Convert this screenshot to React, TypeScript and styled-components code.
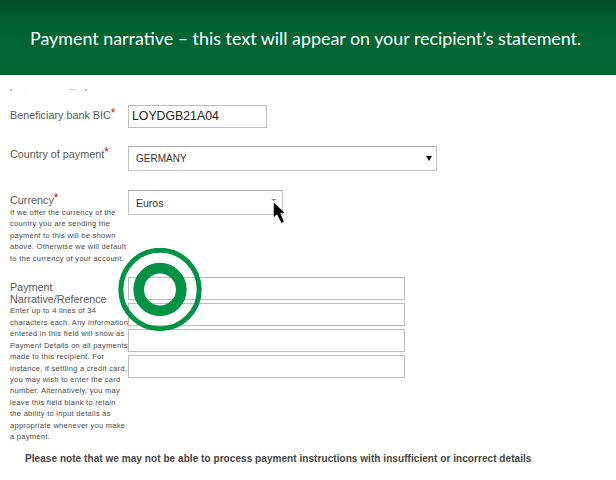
import styled, { createGlobalStyle } from "styled-components";

const GlobalStyle = createGlobalStyle`
  html, body {
    margin: 0;
    padding: 0;
    background: #fff;
  }
`;

const Page = styled.div`
  position: relative;
  width: 616px;
  height: 480px;
  overflow: hidden;
  font-family: "Liberation Sans", Arial, sans-serif;
`;

const Banner = styled.header`
  height: 75px;
  box-sizing: border-box;
  padding: 25px 0 0 30px;
  background: linear-gradient(#014a27 0, #016232 22px, #006633 40px);
  color: #fff;
  font-family: Lato, sans-serif;
  font-size: 17.87px;
  line-height: 26px;
  white-space: nowrap;
`;

const Form = styled.main`
  display: flex;
  flex-direction: column;
  padding: 14px 0 0 10px;
`;

/* what is left of a line cut off by the banner */
const CutLine = styled.div`
  width: 90px;
  height: 2px;
  margin-bottom: 14px;
  background:
    linear-gradient(#bbb, #bbb) 0 0 / 2px 2px no-repeat,
    linear-gradient(#ccc, #ccc) 15px 0 / 1px 1px no-repeat,
    linear-gradient(#ccc, #ccc) 60px 0 / 6px 1px no-repeat,
    linear-gradient(#bbb, #bbb) 75px 0 / 2px 2px no-repeat;
`;

const Row = styled.div<{ $gap: number }>`
  display: flex;
  align-items: flex-start;
  margin-bottom: ${(p) => p.$gap}px;
`;

const LabelColumn = styled.div`
  flex: 0 0 118px;
  width: 118px;
  white-space: nowrap;
`;

const Label = styled.label<{ $top?: number }>`
  display: block;
  padding-top: ${(p) => p.$top ?? 0}px;
  color: #5a5a5a;
  font-size: 10.8px;
  line-height: 12px;
`;

const Required = styled.span`
  color: #d2121a;
  font-size: 12px;
  position: relative;
  top: -2px;
`;

const Help = styled.p<{ $top?: number }>`
  margin: ${(p) => p.$top ?? 0}px 0 0;
  color: #4a4a4a;
  font-size: 7.5px;
  line-height: 11.45px;
  letter-spacing: 0.28px;
`;

const TextBox = styled.div<{ $w: number; $h: number }>`
  box-sizing: border-box;
  width: ${(p) => p.$w}px;
  height: ${(p) => p.$h}px;
  padding-left: 3px;
  border: 1px solid #bdbdbd;
  background: #fff;
  color: #222;
  font-size: 12.3px;
  line-height: ${(p) => p.$h - 2}px;
`;

const Select = styled.div<{ $w: number; $pad: number; $small?: boolean }>`
  display: flex;
  align-items: center;
  justify-content: space-between;
  box-sizing: border-box;
  width: ${(p) => p.$w}px;
  height: 25px;
  padding: 0 ${(p) => p.$pad}px 0 7px;
  border: 1px solid #c4c4c4;
  border-top-color: #aaa;
  background: #fff;
  color: #333;
  font-size: ${(p) => (p.$small ? 10.5 : 10)}px;
`;

const Caret = styled.span<{ $covered?: boolean }>`
  width: 0;
  height: 0;
  margin-bottom: ${(p) => (p.$covered ? 6 : 0)}px;
  border-left: 3px solid transparent;
  border-right: 3px solid transparent;
  border-top: ${(p) => (p.$covered ? "2px solid #888" : "5px solid #111")};
`;

const Inputs = styled.div`
  display: flex;
  flex-direction: column;
  gap: 3px;
`;

const Note = styled.p`
  margin: 10px 0 0 15px;
  color: #444;
  font-size: 10px;
  font-weight: bold;
  letter-spacing: 0.06px;
  white-space: nowrap;
`;

const Target = styled.svg`
  position: absolute;
  left: 118px;
  top: 248px;
`;

const Pointer = styled.svg`
  position: absolute;
  left: 273px;
  top: 202px;
`;

export default function App() {
  return (
    <Page>
      <GlobalStyle />
      <Banner>Payment narrative – this text will appear on your recipient’s statement.</Banner>
      <Form>
        <CutLine />
        <Row $gap={18}>
          <LabelColumn>
            <Label $top={4}>
              Beneficiary bank BIC<Required>*</Required>
            </Label>
          </LabelColumn>
          <TextBox $w={139} $h={23}>LOYDGB21A04</TextBox>
        </Row>
        <Row $gap={19}>
          <LabelColumn>
            <Label $top={2}>
              Country of payment<Required>*</Required>
            </Label>
          </LabelColumn>
          <Select $w={309} $pad={4}>
            GERMANY
            <Caret />
          </Select>
        </Row>
        <Row $gap={13}>
          <LabelColumn>
            <Label $top={4}>
              Currency<Required>*</Required>
            </Label>
            <Help $top={1}>
              If we offer the currency of the
              <br />
              country you are sending the
              <br />
              payment to this will be shown
              <br />
              above. Otherwise we will default
              <br />
              to the currency of your account.
            </Help>
          </LabelColumn>
          <Select $w={155} $pad={5} $small>
            Euros
            <Caret $covered />
          </Select>
        </Row>
        <Row $gap={0}>
          <LabelColumn>
            <Label $top={4}>
              Payment
              <br />
              Narrative/Reference
            </Label>
            <Help>
              Enter up to 4 lines of 34
              <br />
              characters each. Any information
              <br />
              entered in this field will show as
              <br />
              Payment Details on all payments
              <br />
              made to this recipient. For
              <br />
              instance, if settling a credit card,
              <br />
              you may wish to enter the card
              <br />
              number. Alternatively, you may
              <br />
              leave this field blank to retain
              <br />
              the ability to input details as
              <br />
              appropriate whenever you make
              <br />
              a payment.
            </Help>
          </LabelColumn>
          <Inputs>
            <TextBox $w={277} $h={23} />
            <TextBox $w={277} $h={23} />
            <TextBox $w={277} $h={23} />
            <TextBox $w={277} $h={23} />
          </Inputs>
        </Row>
        <Note>Please note that we may not be able to process payment instructions with insufficient or incorrect details</Note>
      </Form>
      <Target width="84" height="84" viewBox="0 0 84 84">
        <circle cx="42" cy="41.5" r="39.2" fill="none" stroke="#009245" strokeWidth="5" />
        <circle cx="42" cy="41.5" r="21.3" fill="none" stroke="#009245" strokeWidth="10.7" />
      </Target>
      <Pointer width="14" height="24" viewBox="0 0 14 24">
        <path d="M1 1 L1 14.5 L4 11.8 L8.5 20.5 L10.5 19.5 L7 11 L11 10.5 Z" fill="#000" stroke="#000" strokeWidth="0.5" />
      </Pointer>
    </Page>
  );
}
